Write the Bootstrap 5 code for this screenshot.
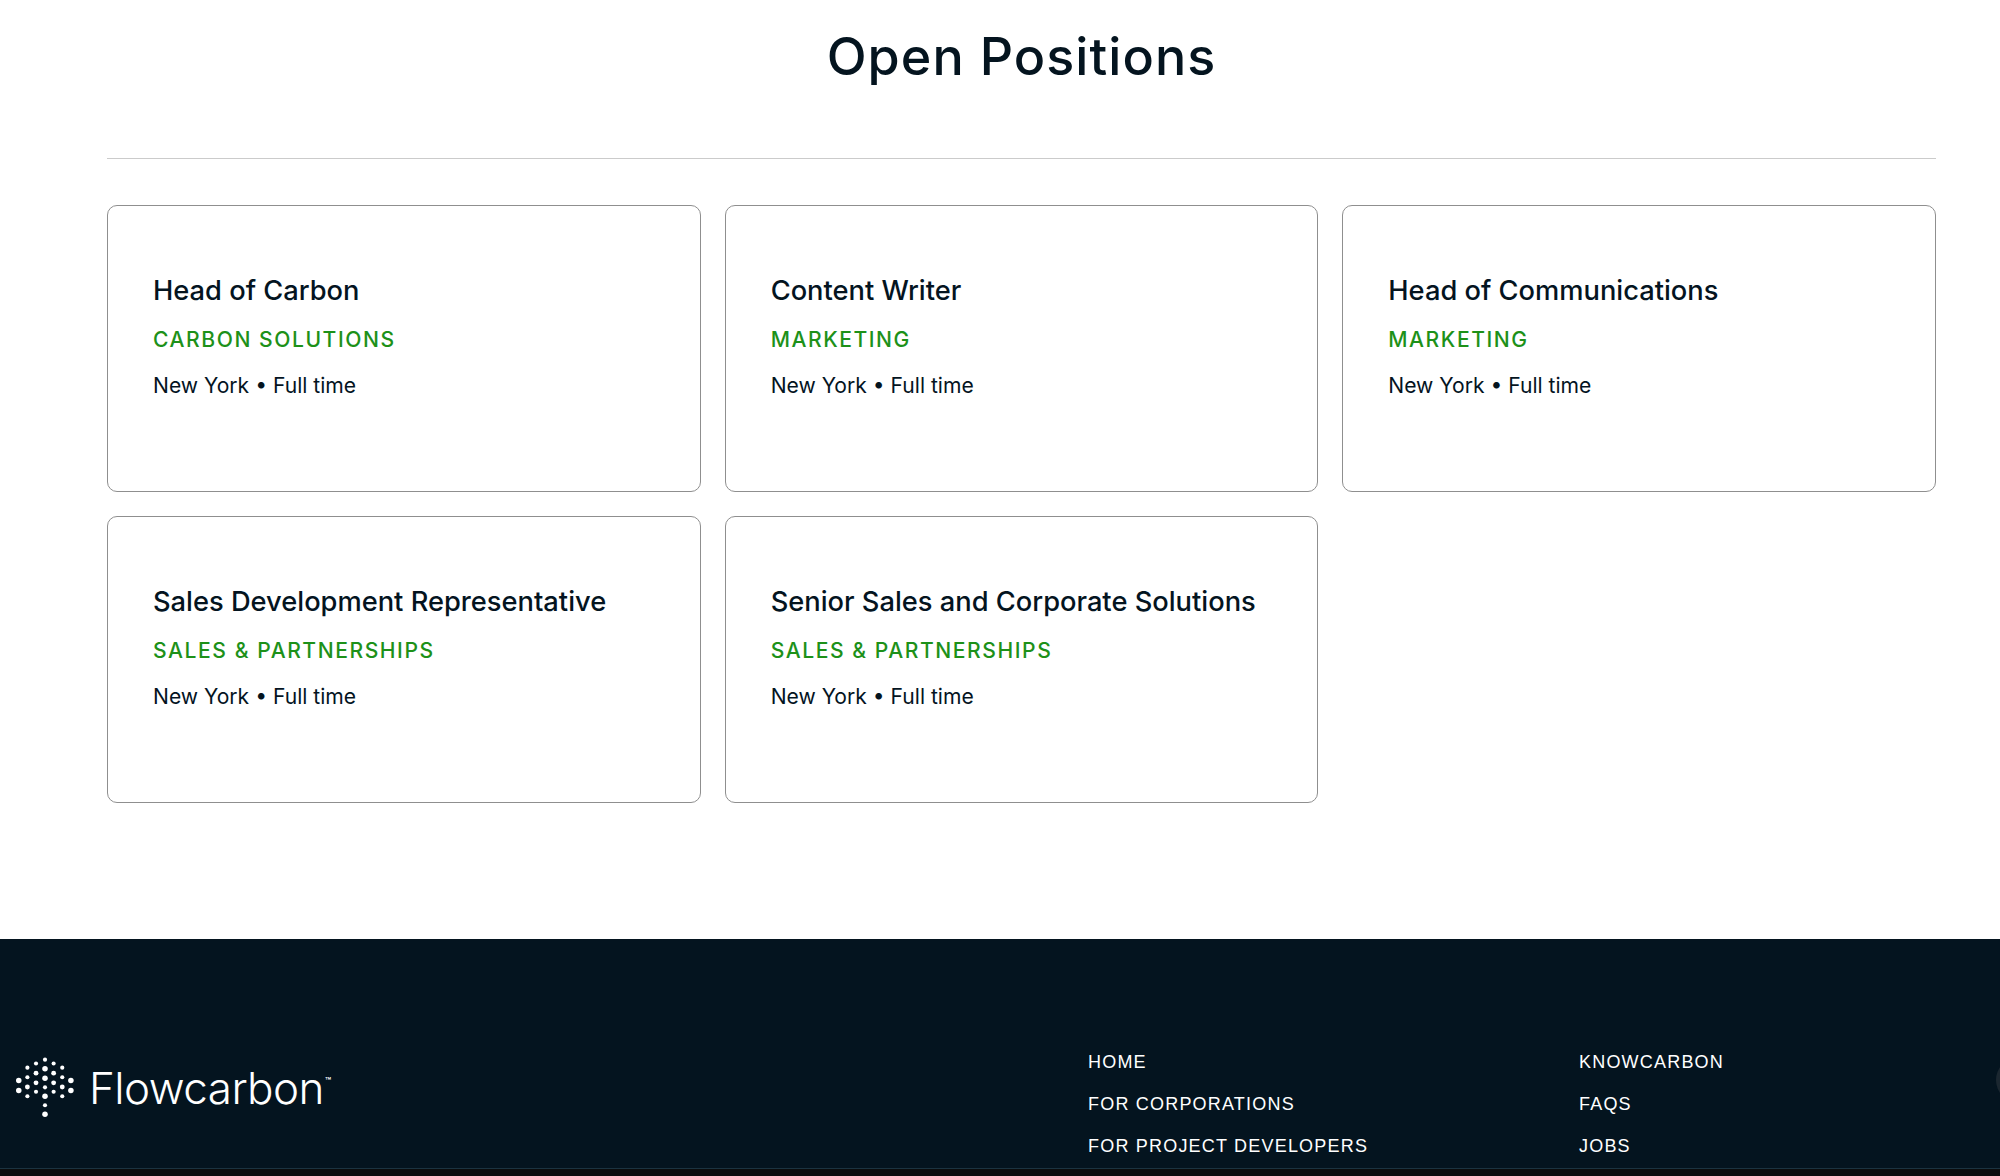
<!DOCTYPE html>
<html lang="en">
<head>
<meta charset="utf-8">
<title>Open Positions</title>
<link href="https://cdn.jsdelivr.net/npm/bootstrap@5.3.0/dist/css/bootstrap.min.css" rel="stylesheet">
<style>
body{font-family:Inter,"Liberation Sans",sans-serif;color:#04141f;background:#fff;height:1176px;overflow:hidden}
.jobs-wrap{padding:27px 64px 0 107px;height:939px}
.jobs-title{font-family:Inter,sans-serif;font-weight:500;font-size:52px;line-height:60px;letter-spacing:1.07px;text-align:center;margin:0;padding-bottom:71px;border-bottom:1px solid #cbcbcb;color:#04141f}
.jobs-row{margin-top:22px}
.job-box{border:1px solid #8f8f8f;border-radius:10px;height:287px;padding:69px 45px 0;background:#fff}
.job-name{font-size:27.27px;line-height:32px;font-weight:500;margin:0 0 20px;color:#04141f}
.job-dept{font-size:21.1px;line-height:26px;letter-spacing:1.55px;font-weight:500;color:#1d9119;margin:0 0 20px;text-transform:uppercase}
.job-meta{font-size:21.1px;line-height:26px;margin:0;color:#04141f}
.site-foot{background:#04141f;height:237px;position:relative;overflow:hidden}
.foot-inner{padding:112px 0 0 16px}
.foot-logo{width:318px;margin-top:6px}
.foot-logo-mark{width:58px;height:62px}
.foot-word{font-family:Inter,sans-serif;font-weight:300;font-size:44px;line-height:50px;letter-spacing:-.55px;color:#fff;margin-left:15px}
.foot-word sup{font-size:10px;font-weight:500;top:-1.9em;letter-spacing:0;margin-left:1px}
.foot-col{margin:0;padding:0;list-style:none}
.foot-col a{display:block;color:#fff;text-decoration:none;font-family:"Liberation Sans",sans-serif;font-size:18px;line-height:22px;letter-spacing:1.2px;margin-bottom:20px}
.foot-col-a{margin-left:754px;width:491px}
.foot-strip{position:absolute;left:0;right:0;bottom:0;height:8px;background:#0b0d0e;border-top:1px solid #1b3340}
.foot-arc{position:absolute;right:-40px;top:119px;width:44px;height:44px;border-radius:50%;background:#1b2730}
</style>
</head>
<body>
<main class="jobs-wrap">
<h1 class="jobs-title">Open Positions</h1>
<div class="row g-4 jobs-row">
<div class="col-4"><div class="job-box"><h2 class="job-name">Head of Carbon</h2><p class="job-dept">Carbon Solutions</p><p class="job-meta">New York • Full time</p></div></div>
<div class="col-4"><div class="job-box"><h2 class="job-name">Content Writer</h2><p class="job-dept">Marketing</p><p class="job-meta">New York • Full time</p></div></div>
<div class="col-4"><div class="job-box"><h2 class="job-name">Head of Communications</h2><p class="job-dept">Marketing</p><p class="job-meta">New York • Full time</p></div></div>
<div class="col-4"><div class="job-box"><h2 class="job-name">Sales Development Representative</h2><p class="job-dept">Sales &amp; Partnerships</p><p class="job-meta">New York • Full time</p></div></div>
<div class="col-4"><div class="job-box"><h2 class="job-name">Senior Sales and Corporate Solutions</h2><p class="job-dept">Sales &amp; Partnerships</p><p class="job-meta">New York • Full time</p></div></div>
</div>
</main>
<footer class="site-foot">
<div class="foot-inner d-flex align-items-start">
<div class="foot-logo d-flex align-items-center flex-shrink-0">
<svg class="foot-logo-mark flex-shrink-0" viewBox="50 114 168 176" fill="#fff" aria-hidden="true">
<circle cx="134" cy="120" r="6"/><circle cx="134" cy="146" r="8"/><circle cx="134" cy="174" r="8"/><circle cx="134" cy="200" r="6"/><circle cx="134" cy="226" r="8"/><circle cx="134" cy="252" r="6"/><circle cx="134" cy="278" r="8"/>
<circle cx="108" cy="131" r="6"/><circle cx="108" cy="159" r="7"/><circle cx="108" cy="187" r="7"/><circle cx="108" cy="213" r="6"/>
<circle cx="159" cy="131" r="6"/><circle cx="159" cy="159" r="7"/><circle cx="159" cy="187" r="7"/><circle cx="159" cy="213" r="6"/>
<circle cx="83" cy="143" r="6"/><circle cx="83" cy="171" r="6"/><circle cx="83" cy="199" r="7"/><circle cx="83" cy="226" r="6"/>
<circle cx="184" cy="143" r="6"/><circle cx="184" cy="171" r="6"/><circle cx="184" cy="199" r="7"/><circle cx="184" cy="226" r="6"/>
<circle cx="58" cy="180" r="8"/><circle cx="58" cy="209" r="8"/><circle cx="209" cy="180" r="8"/><circle cx="209" cy="209" r="8"/>
</svg>
<span class="foot-word">Flowcarbon<sup>™</sup></span>
</div>
<ul class="foot-col foot-col-a"><li><a href="#">HOME</a></li><li><a href="#">FOR CORPORATIONS</a></li><li><a href="#">FOR PROJECT DEVELOPERS</a></li></ul>
<ul class="foot-col"><li><a href="#">KNOWCARBON</a></li><li><a href="#">FAQS</a></li><li><a href="#">JOBS</a></li></ul>
</div>
<div class="foot-arc"></div>
<div class="foot-strip"></div>
</footer>
<script src="https://cdn.jsdelivr.net/npm/bootstrap@5.3.0/dist/js/bootstrap.bundle.min.js"></script>
</body>
</html>
